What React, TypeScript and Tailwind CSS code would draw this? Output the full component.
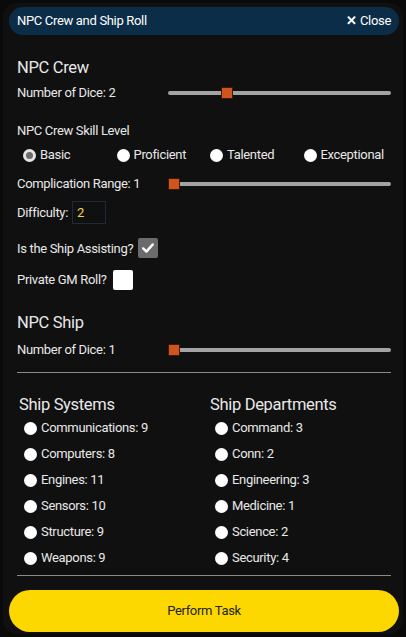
import React from "react";

const font = { fontFamily: "Roboto, 'Liberation Sans', sans-serif" };

function Slider({ pct }: { pct: number }) {
  return (
    <div className="relative h-[12px] flex-1 flex items-center">
      <div className="h-[4px] w-full rounded-full bg-[#a3a3a3]" />
      <div
        className="absolute top-0 h-[12px] w-[12px] border border-[#3a1a0a] bg-[#d0541c]"
        style={{ left: `calc(${pct}% - ${pct * 0.12}px)` }}
      />
    </div>
  );
}

function Radio({ checked }: { checked?: boolean }) {
  return checked ? (
    <span className="inline-block h-[13px] w-[13px] shrink-0 rounded-full border-[3px] border-[#e5e5e5] bg-[#6b6b6b]" />
  ) : (
    <span className="inline-block h-[13px] w-[13px] shrink-0 rounded-full bg-white" />
  );
}

const systems = [
  "Communications: 9",
  "Computers: 8",
  "Engines: 11",
  "Sensors: 10",
  "Structure: 9",
  "Weapons: 9",
];
const departments = [
  "Command: 3",
  "Conn: 2",
  "Engineering: 3",
  "Medicine: 1",
  "Science: 2",
  "Security: 4",
];

export default function App() {
  return (
    <div
      className="relative h-[637px] w-[406px] overflow-hidden bg-[#0a0a0a] p-[3px] text-[#e8e8e8]"
      style={font}
    >
      <div className="flex h-full flex-col rounded-[14px] bg-[#101010] pl-[6px] pr-[4px] pt-[4px] pb-[2px]">
        <div className="flex h-[28px] items-center justify-between rounded-full bg-[#0c2d48] px-[8px] text-[13px] tracking-tight text-white">
          <span>NPC Crew and Ship Roll</span>
          <span className="text-[13px]">
            <span className="font-bold">✕</span> Close
          </span>
        </div>

        <div className="flex flex-col px-[8px] text-[13px] leading-[18px] tracking-tight">
          <h2 className="mt-[23px] text-[16.5px] leading-[20px]">NPC Crew</h2>
          <div className="mt-[6px] flex items-center">
            <span className="w-[151px]">Number of Dice: 2</span>
            <Slider pct={25} />
          </div>

          <div className="mt-[20px]">NPC Crew Skill Level</div>
          <div className="mt-[6px] grid grid-cols-4">
            {["Basic", "Proficient", "Talented", "Exceptional"].map((l, i) => (
              <label key={l} className="flex items-center gap-[4px] pl-[6px]">
                <Radio checked={i === 0} />
                <span>{l}</span>
              </label>
            ))}
          </div>

          <div className="mt-[11px] flex items-center">
            <span className="w-[151px]">Complication Range: 1</span>
            <Slider pct={0} />
          </div>

          <div className="mt-[8px] flex items-center gap-[4px]">
            <span>Difficulty:</span>
            <span className="flex h-[23px] w-[34px] items-center border border-[#1e2b36] px-[4px] text-[13px] text-[#f5d442]">
              2
            </span>
          </div>

          <div className="mt-[14px] flex items-end gap-[5px]">
            <span>Is the Ship Assisting?</span>
            <span className="flex h-[20px] w-[20px] items-center justify-center rounded-[2px] bg-[#6b6b6b]">
              <svg viewBox="0 0 20 20" className="h-[16px] w-[16px]">
                <path d="M4 10.5l4 4 8-9" fill="none" stroke="white" strokeWidth="3" strokeLinecap="round" strokeLinejoin="round" />
              </svg>
            </span>
          </div>

          <div className="mt-[12px] flex items-center gap-[6px]">
            <span>Private GM Roll?</span>
            <span className="h-[20px] w-[20px] rounded-[2px] bg-white" />
          </div>

          <h2 className="mt-[23px] text-[16.5px] leading-[20px]">NPC Ship</h2>
          <div className="mt-[8px] flex items-center">
            <span className="w-[151px]">Number of Dice: 1</span>
            <Slider pct={0} />
          </div>

          <div className="mt-[13px] h-px bg-[#8a8a8a]" />

          <div className="mt-[22px] grid grid-cols-[191px_1fr] pl-[2px]">
            {[
              ["Ship Systems", systems],
              ["Ship Departments", departments],
            ].map(([title, items]) => (
              <div key={title as string} className="flex flex-col">
                <h3 className="text-[16.5px] leading-[20px]">{title as string}</h3>
                <div className="flex flex-col">
                  {(items as string[]).map((it) => (
                    <label key={it} className="flex h-[26px] items-center gap-[4px] pl-[5px]">
                      <Radio />
                      <span>{it}</span>
                    </label>
                  ))}
                </div>
              </div>
            ))}
          </div>

          <div className="mt-[4px] h-px bg-[#8a8a8a]" />
        </div>

        <button className="mt-auto flex h-[42px] items-center justify-center rounded-full bg-[#fdd800] text-[13px] tracking-tight text-[#222]">
          Perform Task
        </button>
      </div>
    </div>
  );
}
